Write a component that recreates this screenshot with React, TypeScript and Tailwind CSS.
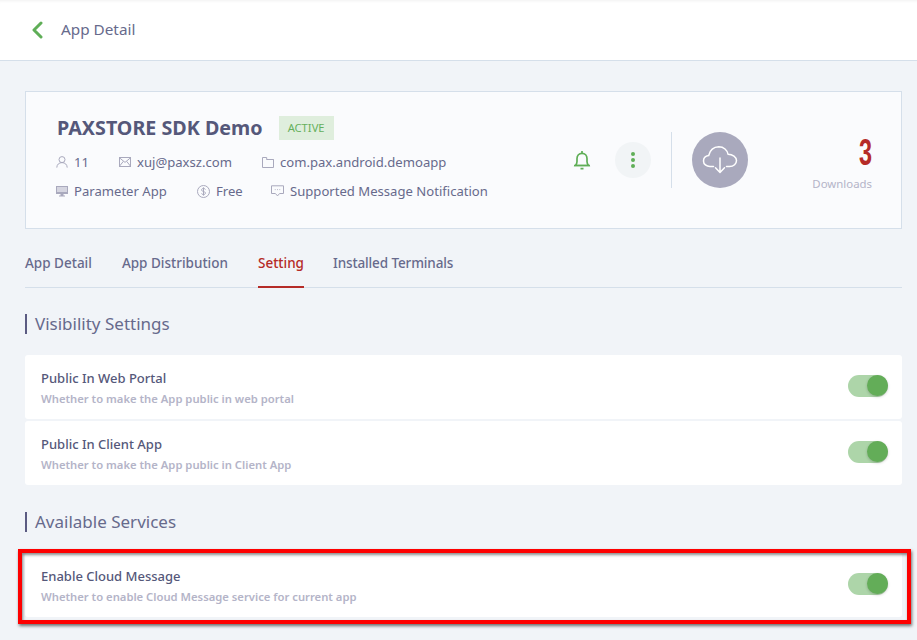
import type { ReactNode } from 'react';

const font = { text: '[font-family:"Noto_Sans",sans-serif]' };

function MetaItem({ icon, label, className = '' }: { icon: ReactNode; label: string; className?: string }) {
  return (
    <div className={`flex items-center gap-[6px] ${className}`}>
      {icon}
      <span className="text-[13.1px] leading-[18px] text-[#676a8c] whitespace-nowrap">{label}</span>
    </div>
  );
}

function UserIcon() {
  return (
    <svg width="12" height="12" viewBox="0 0 12 12" fill="none" stroke="#a9a9bd" strokeWidth="1">
      <circle cx="6" cy="3.6" r="3" />
      <path d="M0.8 11.6c0-3 2.2-5 5.2-5s5.2 2 5.2 5" />
    </svg>
  );
}

function MailIcon() {
  return (
    <svg width="12" height="10" viewBox="0 0 12 10" fill="none" stroke="#a9a9bd" strokeWidth="1">
      <rect x="0.5" y="0.5" width="11" height="9" />
      <path d="M0.5 0.8 6 5.4l5.5-4.6M0.5 9.2l3.8-4.8M11.5 9.2 7.7 4.4" />
    </svg>
  );
}

function FolderIcon() {
  return (
    <svg width="12" height="11" viewBox="0 0 12 11" fill="none" stroke="#a9a9bd" strokeWidth="1">
      <path d="M0.5 0.5h4.2v2h6.8v8h-11z" />
      <path d="M4.7 2.5h6.8" />
    </svg>
  );
}

function MonitorIcon() {
  return (
    <svg width="12" height="11" viewBox="0 0 12 11" fill="#a9a9bd">
      <path d="M0 0h12v8H0z" />
      <path d="M1 1h10v5H1z" fill="#d5d5e0" />
      <path d="M4.5 8h3v1.5H9v1H3v-1h1.5z" />
    </svg>
  );
}

function DollarIcon() {
  return (
    <svg width="13" height="13" viewBox="0 0 13 13" fill="none" stroke="#a9a9bd" strokeWidth="1">
      <circle cx="6.5" cy="6.5" r="6" />
      <path d="M8.4 4.6c-.3-.8-1-1.2-1.9-1.2-1 0-1.9.5-1.9 1.5s.9 1.3 1.9 1.6 1.9.6 1.9 1.6-.9 1.5-1.9 1.5-1.7-.4-1.9-1.2M6.5 2.4v8.2" />
    </svg>
  );
}

function MessageIcon() {
  return (
    <svg width="13" height="12" viewBox="0 0 13 12" fill="none" stroke="#a9a9bd" strokeWidth="1">
      <path d="M0.5 0.8h12v7.7H8.6L6.5 10.9 4.4 8.5H0.5z" />
      <path d="M3.8 4.6h.8M6.1 4.6h.8M8.4 4.6h.8" />
    </svg>
  );
}

function SectionTitle({ children }: { children: ReactNode }) {
  return (
    <div className="flex items-center h-5 border-l-2 border-[#5b5b82] pl-2 text-[17px] leading-5 text-[#676a8c]">
      {children}
    </div>
  );
}

function Toggle() {
  return (
    <div className="relative w-10 h-[22px] mb-[2px] rounded-full bg-[#add5a9]">
      <div className="absolute right-0 top-0 w-[21px] h-[21px] rounded-full bg-[#63ad58] shadow-[0_1px_3px_rgba(0,0,0,0.2)]" />
    </div>
  );
}

function SettingRow({ title, desc }: { title: string; desc: string }) {
  return (
    <div className="flex items-center justify-between h-16 bg-white rounded-[3px] pl-4 pr-[14px]">
      <div className="mt-[2px]">
        <div className="text-[13px] leading-[18px] font-medium text-[#55587a]">{title}</div>
        <div className="mt-[4px] text-[11.25px] leading-4 font-semibold text-[#b4b4c8]">{desc}</div>
      </div>
      <Toggle />
    </div>
  );
}

export default function App() {
  return (
    <div className={`relative h-[640px] overflow-hidden bg-[#f1f4f8] ${font.text}`}>
      {/* header */}
      <div className="flex items-center h-[61px] bg-white border-b border-[#d5dfea] pl-[31px] gap-[18px] shadow-[inset_0_3px_3px_-2px_rgba(0,0,0,0.06)]">
        <svg width="12" height="18" viewBox="0 0 12 18" fill="none" stroke="#5fae57" strokeWidth="3" strokeLinecap="round" strokeLinejoin="round">
          <path d="M10 2 3 9l7 7" />
        </svg>
        <span className="mb-[2px] text-[15.3px] text-[#676a8c]">App Detail</span>
      </div>

      <div className="pl-[25px] pr-[15px] pt-[30px]">
        {/* app summary */}
        <div className="flex items-center h-[138px] bg-[#fafbfd] border border-[#d5dfea] pl-[31px] pr-[29px]">
          <div className="self-start w-[516px] mt-[24px]">
            <div className="flex items-center gap-4">
              <span className="text-[19.7px] leading-6 font-bold text-[#55587a] whitespace-nowrap">PAXSTORE SDK Demo</span>
              <span className="flex items-center h-6 px-[9px] bg-[#dfeedd] text-[11.2px] text-[#66b05c]">ACTIVE</span>
            </div>
            <div className="flex mt-[13px] -ml-px">
              <MetaItem icon={<UserIcon />} label="11" className="w-[63px]" />
              <MetaItem icon={<MailIcon />} label="xuj@paxsz.com" className="w-[143px]" />
              <MetaItem icon={<FolderIcon />} label="com.pax.android.demoapp" />
            </div>
            <div className="flex mt-[11px] -ml-px">
              <MetaItem icon={<MonitorIcon />} label="Parameter App" className="w-[141px]" />
              <MetaItem icon={<DollarIcon />} label="Free" className="w-[74px]" />
              <MetaItem icon={<MessageIcon />} label="Supported Message Notification" />
            </div>
          </div>

          <svg width="18" height="20" viewBox="0 0 18 20" fill="none" stroke="#5fae57" strokeWidth="1.7">
            <path d="M2.5 15.5c1-1.2 1.5-2.2 1.5-4V8.5C4 5.5 6 3.3 9 3.3s5 2.2 5 5.2v3c0 1.8.5 2.8 1.5 4z" />
            <path d="M1 15.5h16M9 1v2.2M7.5 18.6h3" />
          </svg>
          <div className="flex items-center justify-center w-9 h-9 ml-6 rounded-full bg-[#f1f4f6]">
            <svg width="4" height="16" viewBox="0 0 4 16" fill="#5fae57">
              <circle cx="2" cy="2" r="2" />
              <circle cx="2" cy="8" r="2" />
              <circle cx="2" cy="14" r="2" />
            </svg>
          </div>
          <div className="w-px h-14 ml-[20px] bg-[#d5dfea]" />
          <div className="flex items-center justify-center w-14 h-14 ml-[20px] rounded-full bg-[#a9a9bd]">
            <svg width="36" height="30" viewBox="0 0 36 30" fill="none" stroke="#ffffff" strokeWidth="1.5" strokeLinecap="round" strokeLinejoin="round">
              <path d="M11.5 21.5H8c-3.6 0-6.5-2.4-6.5-5.6 0-2.8 2.2-5 5.2-5.4C7.8 6 11 2 16.8 1.8c5 0 8.5 3.4 9.2 7.4 4.6 0 8.5 2.8 8.5 6.4 0 3.2-2.8 5.9-7 5.9h-3" />
              <path d="M18 13v14M13.5 22.8 18 27.4l4.5-4.6" />
            </svg>
          </div>
          <div className="self-start flex flex-col items-end ml-auto mt-[43px]">
            <span className="text-[36px] leading-[36px] font-bold text-[#b52b27] [font-family:'Liberation_Sans',sans-serif] scale-x-[0.65] origin-right">3</span>
            <span className="mt-[5px] text-[11.4px] leading-4 text-[#b4b4c8]">Downloads</span>
          </div>
        </div>

        {/* tabs */}
        <div className="flex gap-[30px] h-[59px] border-b border-[#d5dfea] text-[13.5px] font-medium text-[#676a8c]">
          <div className="flex items-end pb-[14px]">App Detail</div>
          <div className="flex items-end pb-[14px]">App Distribution</div>
          <div className="flex items-end pb-[13px] -mb-px border-b-2 border-[#b52b27] text-[#b52b27]">Setting</div>
          <div className="flex items-end pb-[14px] -ml-px tracking-[-0.12px]">Installed Terminals</div>
        </div>

        <div className="mt-[26px]">
          <SectionTitle>Visibility Settings</SectionTitle>
        </div>
        <div className="flex flex-col gap-[2px] mt-[21px]">
          <SettingRow title="Public In Web Portal" desc="Whether to make the App public in web portal" />
          <SettingRow title="Public In Client App" desc="Whether to make the App public in Client App" />
        </div>

        <div className="mt-[27px]">
          <SectionTitle>Available Services</SectionTitle>
        </div>
        <div className="mt-[21px]">
          <SettingRow title="Enable Cloud Message" desc="Whether to enable Cloud Message service for current app" />
        </div>
      </div>

      {/* red annotation box */}
      <div className="absolute left-[18px] top-[549px] w-[893px] h-[75px] border-4 border-[#fe0000] shadow-[1px_2px_3px_rgba(0,0,0,0.55),inset_1px_2px_3px_rgba(0,0,0,0.45)]" />
    </div>
  );
}
